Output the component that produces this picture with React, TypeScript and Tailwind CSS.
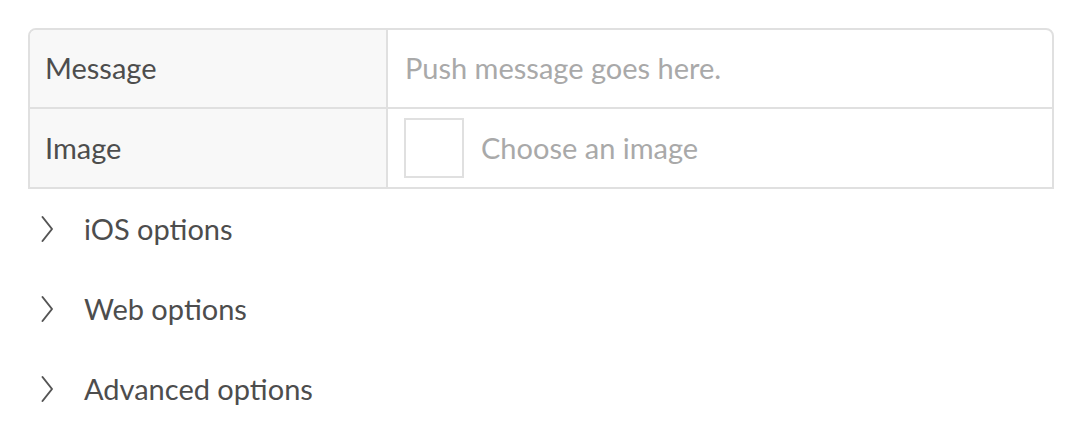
import React from "react";

function Chevron() {
  return (
    <svg width="14" height="28" viewBox="0 0 14 28" fill="none" className="shrink-0">
      <path d="M2.5 2 L12 14 L2.5 26" stroke="#555555" strokeWidth="2" strokeLinecap="round" strokeLinejoin="round" />
    </svg>
  );
}

export default function App() {
  const font = { fontFamily: "Lato, 'Open Sans', sans-serif" };
  return (
    <div className="w-[1080px] h-[432px] bg-white pt-[28px] pl-[28px]" style={font}>
      <div className="w-[1026px] border-2 border-[#e0e0e0] rounded-t-[8px] overflow-hidden">
        <div className="flex h-[79px] border-b-2 border-[#e0e0e0]">
          <div className="w-[358px] bg-[#f8f8f8] border-r-2 border-[#e0e0e0] flex items-center pl-[15px] pb-[2px] text-[29px] text-[#4d4d4d]">
            Message
          </div>
          <div className="flex-1 flex items-center pl-[17px] pb-[2px] text-[29px] text-[#a9a9a9]">
            Push message goes here.
          </div>
        </div>
        <div className="flex h-[78px]">
          <div className="w-[358px] bg-[#f8f8f8] border-r-2 border-[#e0e0e0] flex items-center pl-[15px] text-[29px] text-[#4d4d4d]">
            Image
          </div>
          <div className="flex-1 flex items-center pl-[16px] gap-[17px] text-[29px] text-[#a9a9a9]">
            <div className="w-[60px] h-[60px] border-2 border-[#e0e0e0] bg-white" />
            <span>Choose an image</span>
          </div>
        </div>
      </div>
      <div className="flex flex-col">
        {["iOS options", "Web options", "Advanced options"].map((t) => (
          <div key={t} className="flex items-center h-[80px] pl-[12px] gap-[30px] text-[29px] text-[#4d4d4d]">
            <Chevron />
            <span>{t}</span>
          </div>
        ))}
      </div>
    </div>
  );
}
